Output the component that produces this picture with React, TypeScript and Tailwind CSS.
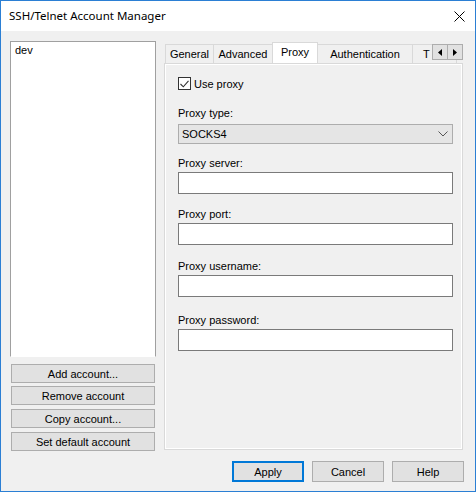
import React from "react"

const font = { fontFamily: '"Liberation Sans", Arial, sans-serif' }

function SideButton({ label }: { label: string }) {
  return (
    <button className="ml-px block h-[19px] w-[144px] border border-[#adadad] bg-[#e1e1e1] text-[11px] leading-[16px] text-black">
      {label}
    </button>
  )
}

function Field({ label, top }: { label: string; top: string }) {
  return (
    <>
      <div className={`${top} h-[16px] text-[11px] leading-[16px] text-black`}>{label}</div>
      <div className="mt-px h-[22px] w-[275px] shrink-0 border border-[#7a7a7a] bg-white" />
    </>
  )
}

export default function App() {
  return (
    <div
      className="flex h-[492px] w-[476px] flex-col border border-[#2b7fd4] bg-[#f0f0f0] text-black"
      style={font}
    >
      {/* title bar */}
      <div className="flex h-[30px] shrink-0 items-center justify-between bg-white pl-[8px] pr-[9px]">
        <span className="text-[11.5px] leading-[16px]" style={{ fontFamily: '"Noto Sans", sans-serif' }}>
          SSH/Telnet Account Manager
        </span>
        <svg width="11" height="11" viewBox="0 0 11 11" className="mr-[1px]">
          <path d="M0.5 0.5 L10.5 10.5 M10.5 0.5 L0.5 10.5" stroke="#000" strokeWidth="1" fill="none" />
        </svg>
      </div>

      <div className="flex shrink-0 pt-[10px]">
        {/* accounts */}
        <div className="ml-[9px] flex w-[146px] flex-col">
          <div className="h-[316px] shrink-0 border border-b-white border-l-[#a0a0a0] border-r-[#a0a0a0] border-t-[#a0a0a0] bg-white">
            <div className="px-[4px] text-[11px] leading-[16px]">dev</div>
          </div>
          <div className="mt-[7px]">
            <SideButton label="Add account..." />
          </div>
          <div className="mt-[3px]">
            <SideButton label="Remove account" />
          </div>
          <div className="mt-[4px]">
            <SideButton label="Copy account..." />
          </div>
          <div className="mt-[4px]">
            <SideButton label="Set default account" />
          </div>
        </div>

        {/* tab control */}
        <div className="ml-[8px] mt-px w-[299px]">
          <div className="relative flex h-[21px] items-end overflow-hidden pl-px text-[11px] leading-[16px]">
            <div className="flex h-[19px] w-[48px] shrink-0 items-center justify-center border-l border-t border-[#d9d9d9]">
              General
            </div>
            <div className="flex h-[19px] w-[59px] shrink-0 items-center justify-center border-l border-t border-[#d9d9d9]">
              Advanced
            </div>
            <div className="relative z-10 -mb-px flex h-[22px] w-[46px] shrink-0 items-start justify-center border-x border-t border-[#d9d9d9] bg-white pt-[1px]">
              Proxy
            </div>
            <div className="flex h-[19px] w-[95px] shrink-0 items-center justify-center border-r border-t border-[#d9d9d9]">
              Authentication
            </div>
            <div className="flex h-[19px] w-[44px] shrink-0 items-center border-r border-t border-[#d9d9d9] pl-[10px]">
              T
            </div>
            <div className="absolute right-0 top-[2px] z-20 flex">
              <div className="flex h-[16px] w-[16px] items-center justify-center border border-[#adadad] bg-[#e1e1e1]">
                <svg width="4" height="7" viewBox="0 0 4 7">
                  <path d="M4 0 L0 3.5 L4 7 Z" fill="#000" />
                </svg>
              </div>
              <div className="-ml-px flex h-[16px] w-[16px] items-center justify-center border border-[#adadad] bg-[#e1e1e1]">
                <svg width="4" height="7" viewBox="0 0 4 7">
                  <path d="M0 0 L4 3.5 L0 7 Z" fill="#000" />
                </svg>
              </div>
            </div>
          </div>

          <div className="flex h-[387px] flex-col border border-[#d9d9d9] pl-[13px] shadow-[inset_0_0_0_1px_#ffffff]">
            <div className="mt-[13px] flex h-[13px] items-center">
              <div className="flex h-[13px] w-[13px] items-center justify-center border border-[#333333] bg-white">
                <svg width="9" height="8" viewBox="0 0 9 8">
                  <path d="M0.5 4 L3.3 6.8 L8.5 0.8" stroke="#333" strokeWidth="1.1" fill="none" />
                </svg>
              </div>
              <span className="ml-[3px] text-[11px] leading-[16px]">Use proxy</span>
            </div>

            <div className="mt-[15px] h-[16px] text-[11px] leading-[16px]">Proxy type:</div>
            <div className="mt-[3px] flex h-[20px] w-[275px] shrink-0 items-center justify-between border border-[#adadad] bg-[#e5e5e5] pl-[3px] pr-[4px] text-[11px] leading-[16px]">
              <span>SOCKS4</span>
              <svg width="10" height="6" viewBox="0 0 10 6">
                <path d="M0.5 0.5 L5 5 L9.5 0.5" stroke="#555" strokeWidth="1" fill="none" />
              </svg>
            </div>

            <Field label="Proxy server:" top="mt-[11px]" />
            <Field label="Proxy port:" top="mt-[12px]" />
            <Field label="Proxy username:" top="mt-[13px]" />
            <Field label="Proxy password:" top="mt-[15px]" />
          </div>
        </div>
      </div>

      {/* dialog buttons */}
      <div className="mt-[10px] flex justify-end gap-[8px] pr-[11px] text-[11px] leading-[16px]">
        <button className="h-[21px] w-[72px] border-2 border-[#0078d7] bg-[#e1e1e1]">Apply</button>
        <button className="h-[21px] w-[72px] border border-[#adadad] bg-[#e1e1e1]">Cancel</button>
        <button className="h-[21px] w-[72px] border border-[#adadad] bg-[#e1e1e1]">Help</button>
      </div>
    </div>
  )
}
